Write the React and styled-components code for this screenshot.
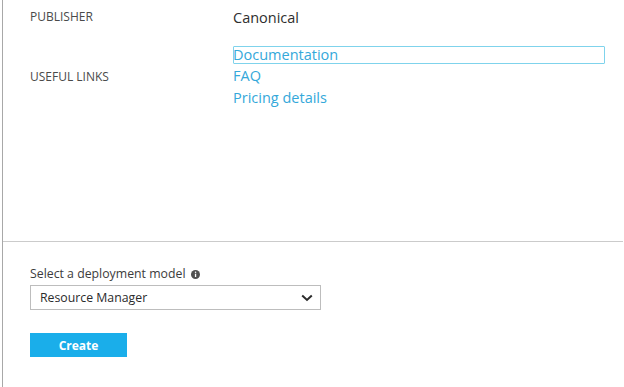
import React from 'react'
import styled, { createGlobalStyle } from 'styled-components';

const GlobalStyle = createGlobalStyle`
    html, body{
        margin: 0;
        padding: 0;
        background: #fff;
    }
    body{
        font-family: "Open Sans", "Noto Sans", "Liberation Sans", sans-serif;
    }
`;

const links = [
    { id: 1, title: 'Documentation', focused: true },
    { id: 2, title: 'FAQ' },
    { id: 3, title: 'Pricing details' },
];

function InfoIcon() {
    return (
        <svg width="9" height="9" viewBox="0 0 9 9" aria-hidden="true">
            <circle cx="4.5" cy="4.5" r="4.5" fill="#505050" />
            <rect x="3.9" y="3.7" width="1.3" height="3.3" fill="#fff" />
            <circle cx="4.55" cy="2.3" r="0.75" fill="#fff" />
        </svg>
    )
}

function Chevron() {
    return (
        <svg width="12" height="8" viewBox="0 0 12 8" aria-hidden="true">
            <path d="M1.2 1.5 L6 6 L10.8 1.5" fill="none" stroke="#2b2b2b" strokeWidth="2" />
        </svg>
    )
}

function App() {
    return (
        <>
            <GlobalStyle />
            <BladeStyled>
                <Essentials>
                    <Row>
                        <Label>PUBLISHER</Label>
                        <Value>Canonical</Value>
                    </Row>
                    <Row center>
                        <Label>USEFUL LINKS</Label>
                        <LinkList>
                            {
                                links.map((link) => {
                                    return <LinkItem href="#" key={link.id} focused={link.focused ? 1 : 0}>{link.title}</LinkItem>
                                })
                            }
                        </LinkList>
                    </Row>
                </Essentials>
                <Footer>
                    <FieldLabel>
                        Select a deployment model <InfoIcon />
                    </FieldLabel>
                    <SelectBox>
                        <span>Resource Manager</span>
                        <Chevron />
                    </SelectBox>
                    <CreateButton>Create</CreateButton>
                </Footer>
            </BladeStyled>
        </>
    )
}

const BladeStyled = styled.div`
    width: 621px;
    height: 387px;
    margin-left: 2px;
    border-left: 1px solid #a8a8a8;
    display: flex;
    flex-direction: column;
    box-sizing: border-box;
    overflow: hidden;
`;

const Essentials = styled.div`
    height: 241px;
    box-sizing: border-box;
    padding: 7px 18px 0 27px;
    display: flex;
    flex-direction: column;
    gap: 17px;
`;

const Row = styled.div`
    display: grid;
    grid-template-columns: 203px 1fr;
    align-items: ${props => props.center ? 'center' : 'start'};
`;

const Label = styled.div`
    font-size: 12px;
    line-height: 20px;
    color: #4a4a4a;
`;

const Value = styled.div`
    font-size: 14.5px;
    line-height: 22px;
    color: #2e2e2e;
`;

const LinkList = styled.div`
    display: flex;
    flex-direction: column;
    gap: 1px;
`;

const LinkItem = styled.a`
    display: block;
    font-size: 14.5px;
    line-height: ${props => props.focused ? '18px' : '21px'};
    color: #34a8da;
    text-decoration: none;
    outline: ${props => props.focused ? '1px solid #7fd3ec' : 'none'};
    outline-offset: -1px;
    border-radius: 1px;
`;

const Footer = styled.div`
    border-top: 1px solid #cbcbcb;
    padding: 22px 0 0 27px;
    display: flex;
    flex-direction: column;
    align-items: flex-start;
`;

const FieldLabel = styled.div`
    display: flex;
    align-items: center;
    gap: 5px;
    font-size: 12.3px;
    line-height: 20px;
    color: #3c3c3c;
`;

const SelectBox = styled.div`
    margin-top: 1px;
    width: 291px;
    height: 25px;
    box-sizing: border-box;
    border: 1px solid #bdbdbd;
    padding: 0 7px 0 9px;
    display: flex;
    align-items: center;
    justify-content: space-between;
    font-size: 12.3px;
    color: #2b2b2b;
`;

const CreateButton = styled.button`
    margin-top: 23px;
    width: 97px;
    height: 24px;
    border: none;
    background: #1aaeea;
    color: #fff;
    font-family: inherit;
    font-weight: 700;
    font-size: 12px;
    padding: 0;
    cursor: pointer;
`;

export default App;
